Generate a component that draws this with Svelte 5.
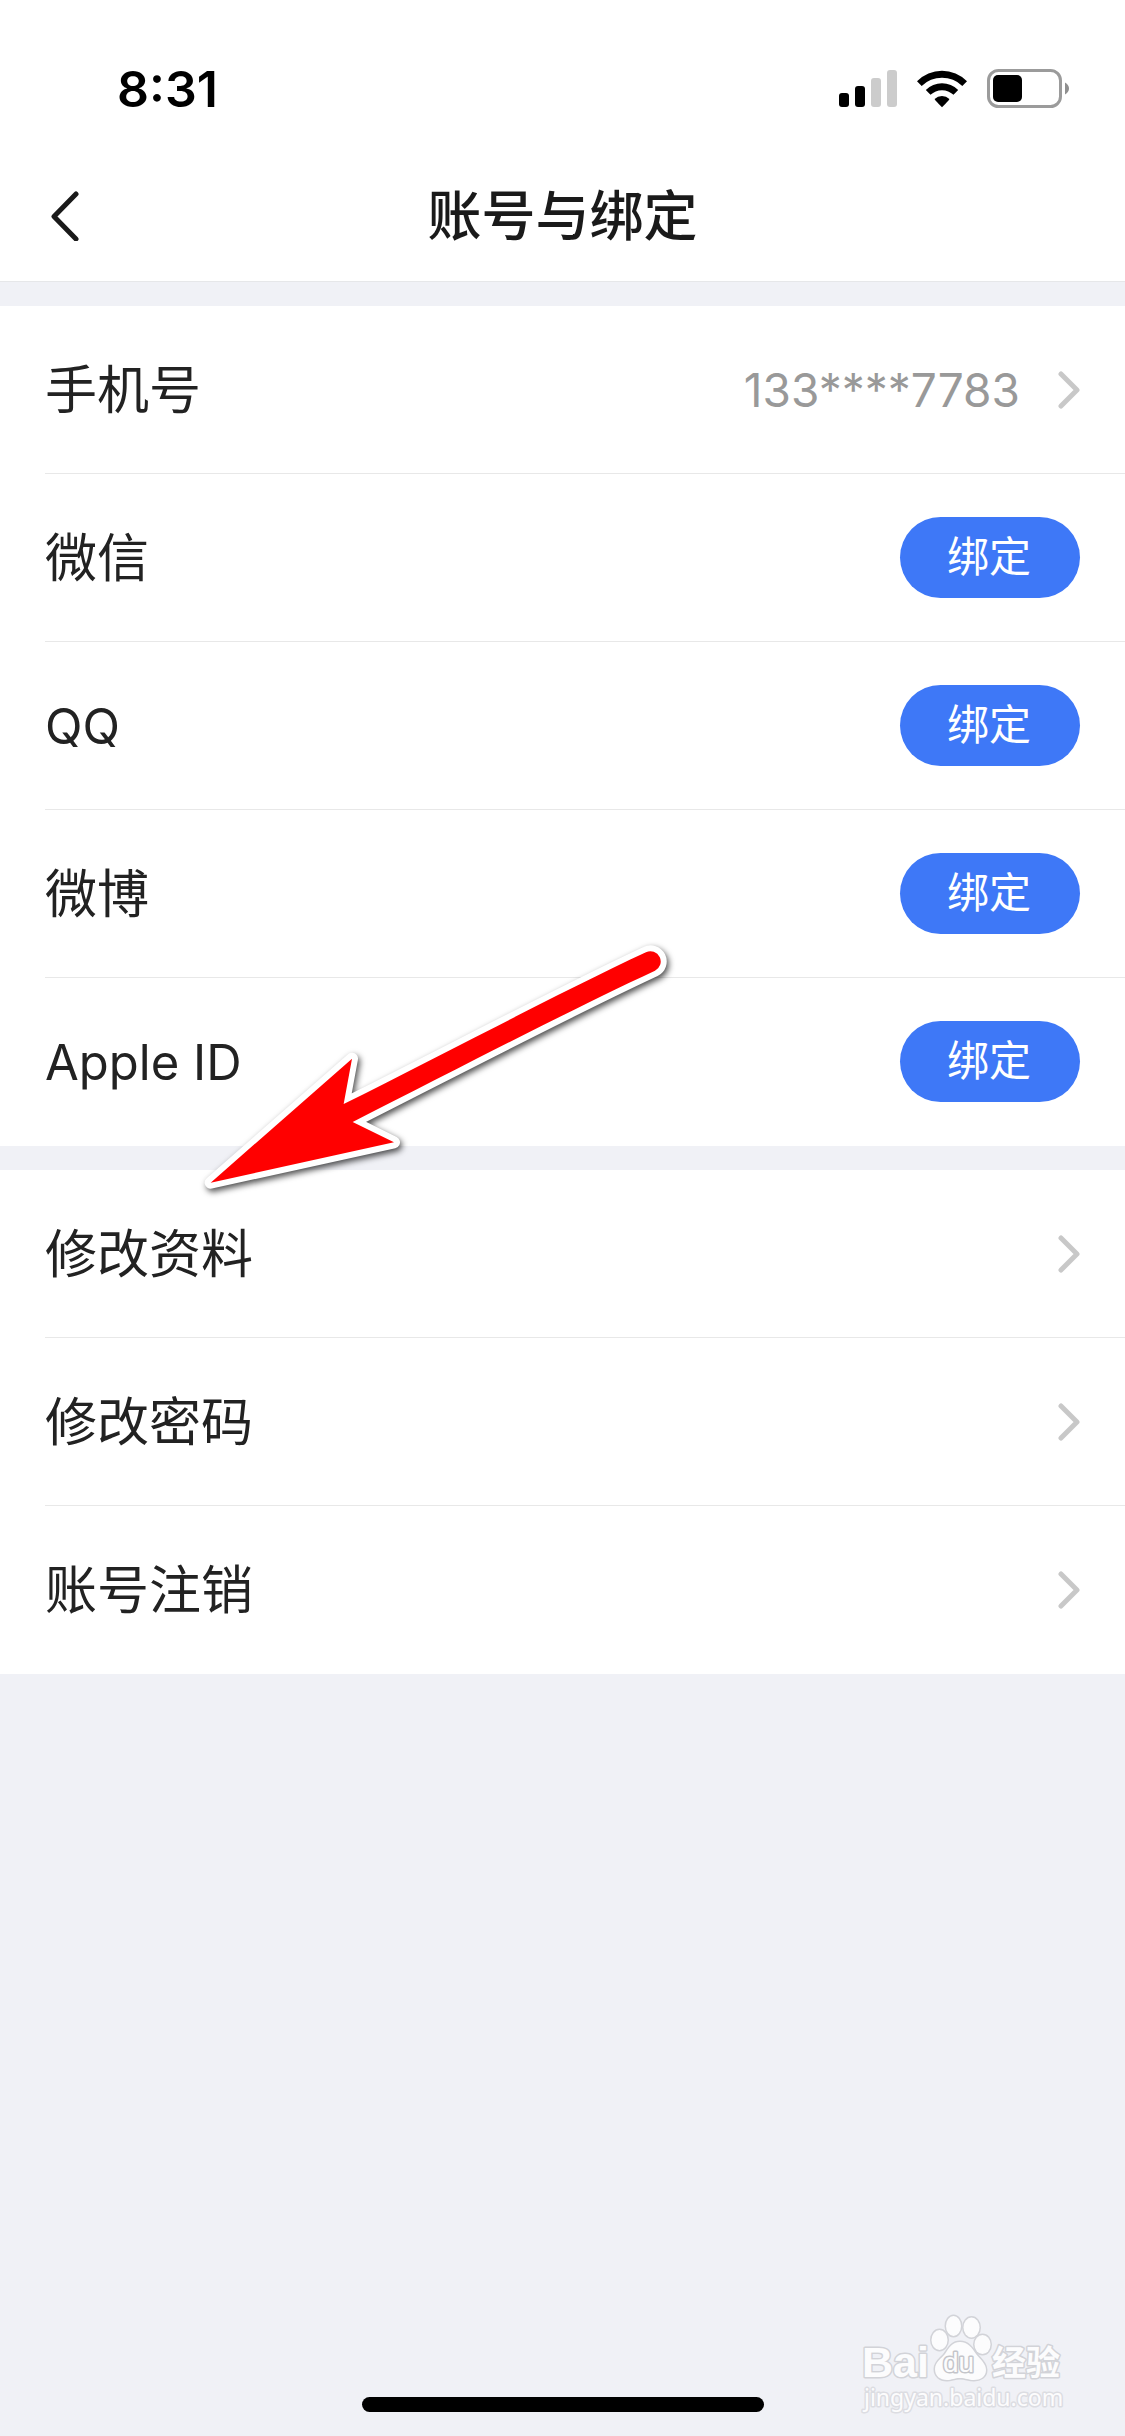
<script>
  const accounts = [
    { name: '微信' },
    { name: 'QQ', latin: true },
    { name: '微博' },
    { name: 'Apple ID', latin: true }
  ];
  const settings = ['修改资料', '修改密码', '账号注销'];
</script>

{#snippet chevron()}
  <svg class="chevron" width="22" height="38" viewBox="0 0 22 38" aria-hidden="true">
    <path d="M3 3 19 19 3 35" />
  </svg>
{/snippet}

<div class="page">
  <div class="status">
    <span class="time">8:31</span>
    <div class="indicators">
      <svg width="58" height="38" viewBox="0 0 58 38" aria-label="信号">
        <rect x="0" y="23" width="10" height="14" rx="3" />
        <rect x="16" y="16" width="10" height="21" rx="3" />
        <rect x="32" y="8" width="10" height="29" rx="3" fill="#ccc" />
        <rect x="48" y="0" width="10" height="37" rx="3" fill="#ccc" />
      </svg>
      <svg width="50" height="38" viewBox="0 0 50 38" aria-label="无线网络">
        <path d="M0 11.3A35 35 0 0 1 50 11.3L45.3 16A29 29 0 0 0 4.7 16Z" />
        <path d="M8.8 20A23 23 0 0 1 41.2 20L36.5 24.8A16.5 16.5 0 0 0 13.5 24.8Z" />
        <path d="M17.6 29A10.5 10.5 0 0 1 32.4 29Q32.4 30 25 37.2 17.6 30 17.6 29Z" />
      </svg>
      <svg width="82" height="40" viewBox="0 0 82 40" aria-label="电池">
        <rect x="1.5" y="1.5" width="72" height="36" rx="10" fill="none" stroke="#9b9b9b" stroke-width="3" />
        <rect x="6" y="6" width="29" height="27" rx="5" />
        <path d="M78 13.5Q82 16 82 19.5T78 25.5Z" fill="#8f8f8f" />
      </svg>
    </div>
  </div>

  <header>
    <button class="back" aria-label="返回">
      <svg width="28" height="50" viewBox="0 0 28 50" aria-hidden="true">
        <path d="M25 3 3 25.5 25 48" />
      </svg>
    </button>
    <h1>账号与绑定</h1>
  </header>

  <main>
    <section>
      <a class="row" href="#phone">
        <span class="label">手机号</span>
        <span class="value">133****7783 {@render chevron()}</span>
      </a>
      {#each accounts as { name, latin }}
        <div class="row">
          <span class="label" class:latin>{name}</span>
          <button class="bind" aria-label={`绑定 ${name}`}>绑定</button>
        </div>
      {/each}
    </section>

    <section>
      {#each settings as name}
        <a class="row" href="#settings">
          <span class="label">{name}</span>
          {@render chevron()}
        </a>
      {/each}
    </section>
  </main>

  <div class="home"></div>

  <svg class="arrow" width="520" height="300" viewBox="0 0 1560 900" aria-hidden="true">
    <path d="M92 788 516 416 491 552C800 398 1150 212 1398 97A30 30 0 0 1 1425 152C1175 268 830 448 518 606L642 667Z" />
  </svg>

  <svg class="watermark" width="285" height="146" viewBox="0 0 285 146" aria-label="Baidu 经验">
    <text class="brand" x="22" y="87">Bai</text>
    <g>
      <ellipse cx="99.5" cy="50" rx="8" ry="10" />
      <ellipse cx="113.5" cy="36" rx="7.5" ry="10" />
      <ellipse cx="131.5" cy="37.5" rx="8" ry="10" />
      <ellipse cx="142.5" cy="54.5" rx="8" ry="9.5" />
      <path d="M120 52C128 52 132 58 136 64 141 70 146 74 146 80 146 87 140 90 134 90 128 90 126 88 120 88 114 88 112 90 107 90 100 90 95 86 95 79 95 72 101 69 105 64 109 58 112 52 120 52Z" />
    </g>
    <text class="du" x="103" y="82">du</text>
    <text class="cn" x="152" y="85">经验</text>
    <text class="site" x="24" y="116">jingyan.baidu.com</text>
  </svg>
</div>

<style>
  :global(body) {
    background: #f0f1f6;
  }
  .page {
    position: relative;
    display: flex;
    flex-direction: column;
    min-height: 100vh;
    box-sizing: border-box;
    overflow: hidden;
    font-family: Inter, 'Noto Sans CJK SC', sans-serif;
    color: #222;
  }
  .status {
    display: flex;
    justify-content: space-between;
    align-items: center;
    height: 150px;
    padding: 28px 56px 0 117px;
    box-sizing: border-box;
    background: #fff;
  }
  .time {
    font-size: 50px;
    line-height: 60px;
    font-weight: 600;
    color: #000;
  }
  .indicators {
    display: flex;
    align-items: center;
    gap: 20px;
  }
  header {
    display: grid;
    grid-template-columns: 1fr auto 1fr;
    align-items: center;
    height: 132px;
    padding: 0 45px;
    box-sizing: border-box;
    background: #fff;
    border-bottom: 1px solid #e6e7e9;
  }
  h1 {
    margin: 0;
    padding-top: 2px;
    font-size: 54px;
    line-height: 80px;
    font-weight: 500;
    color: #1a1a1a;
  }
  button {
    border: 0;
    font-family: inherit;
    cursor: pointer;
  }
  .back {
    display: flex;
    justify-self: start;
    padding: 6px;
    background: none;
  }
  .back path,
  .chevron path {
    fill: none;
    stroke: #1a1a1a;
    stroke-width: 5;
    stroke-linecap: round;
    stroke-linejoin: round;
  }
  .chevron path {
    stroke: #c8c8c8;
  }
  main {
    display: flex;
    flex-direction: column;
    gap: 24px;
    padding-top: 24px;
  }
  section {
    background: #fff;
  }
  .row {
    display: flex;
    align-items: center;
    justify-content: space-between;
    height: 168px;
    margin-left: 45px;
    padding-right: 45px;
    box-sizing: border-box;
    border-bottom: 1px solid #e8e8e8;
    line-height: 76px;
    color: inherit;
    text-decoration: none;
  }
  .row:last-child {
    border-bottom-color: transparent;
  }
  .label {
    padding-top: 2px;
    font-size: 52px;
  }
  .label.latin {
    font-size: 49px;
  }
  .value {
    display: flex;
    align-items: center;
    gap: 38px;
    font-size: 46px;
    color: #999;
  }
  .bind {
    width: 180px;
    height: 81px;
    padding: 0 2px 2px 0;
    border-radius: 41px;
    background: #3e78f7;
    font-size: 42px;
    line-height: 60px;
    color: #fff;
  }
  .home {
    width: 402px;
    height: 15px;
    margin: auto auto 24px;
    border-radius: 8px;
    background: #000;
  }
  .arrow {
    position: absolute;
    left: 180px;
    top: 920px;
    overflow: visible;
    filter: drop-shadow(2px 3px 3px rgba(0, 0, 0, 0.7));
    pointer-events: none;
  }
  .arrow path {
    fill: #f00;
    stroke: #fff;
    stroke-width: 36;
    stroke-linejoin: round;
    paint-order: stroke;
  }
  .watermark {
    position: absolute;
    right: 0;
    bottom: 0;
    fill: #fcfcfd;
    stroke: #d2d3d8;
    stroke-width: 3;
    stroke-linejoin: round;
    paint-order: stroke;
    font-family: 'Liberation Sans', 'Noto Sans CJK SC', sans-serif;
    font-weight: 700;
  }
  .brand {
    font-size: 43px;
  }
  .du {
    font-size: 28px;
    font-weight: 400;
    stroke: #c4c5ca;
  }
  .cn {
    font-size: 34px;
  }
  .site {
    font-family: 'Noto Sans', sans-serif;
    font-size: 23px;
    font-weight: 400;
    stroke: #dcdde2;
  }
</style>
